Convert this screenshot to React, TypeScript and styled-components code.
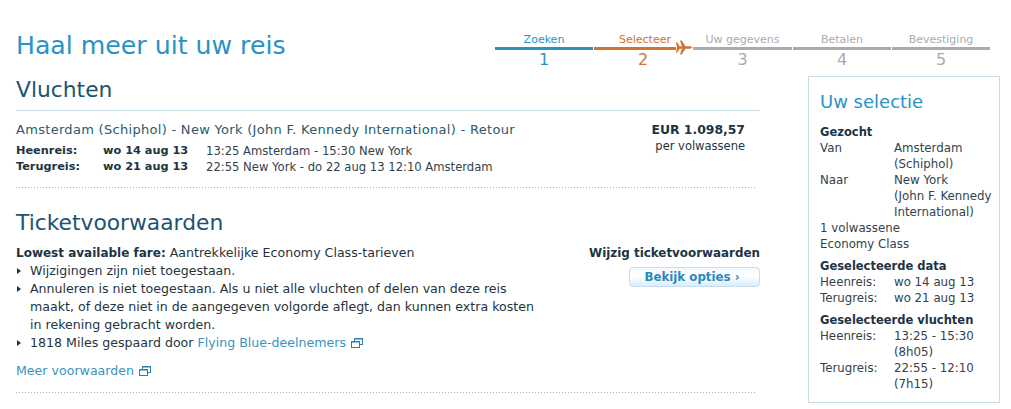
import styled, { createGlobalStyle, css } from "styled-components";

const GlobalStyle = createGlobalStyle`
  html, body {
    margin: 0;
    padding: 0;
    background: #fff;
  }
  body {
    font-family: "DejaVu Sans", Verdana, sans-serif;
    font-size: 11.5px;
    color: #1f3440;
  }
`;

const dottedBottom = css`
  background: repeating-linear-gradient(to right, #9fb4bd 0 1px, transparent 1px 3px) left bottom / 741px 1px no-repeat;
`;

const Page = styled.div`
  width: 1011px;
  height: 409px;
  overflow: hidden;
  box-sizing: border-box;
  padding: 30px 11px 0 16px;
`;

const TopRow = styled.div`
  display: flex;
  justify-content: space-between;
  height: 46px;
`;

const Title = styled.h1`
  margin: 0;
  font-size: 25.2px;
  line-height: 32px;
  font-weight: 400;
  color: #2a93c4;
`;

const Stepper = styled.ol`
  display: flex;
  list-style: none;
  margin: 0 10px 0 0;
  padding: 3px 0 0;
  gap: 1px;
`;

const Step = styled.li<{ $color: string; $width: number }>`
  position: relative;
  width: ${({ $width }) => $width}px;
  color: ${({ $color }) => $color};
  text-align: center;
  font-size: 11px;
  line-height: 13px;
  box-sizing: border-box;
`;

const StepLabel = styled.div<{ $plane?: boolean }>`
  padding-left: ${({ $plane }) => ($plane ? 4 : 0)}px;
`;

const StepBar = styled.div<{ $color: string; $plane?: boolean }>`
  height: 3px;
  margin-top: 1px;
  margin-right: ${({ $plane }) => ($plane ? 16 : 0)}px;
  background: ${({ $color }) => $color};
`;

const StepNumber = styled.div`
  font-size: 16px;
  line-height: 20px;
`;

const PlaneIcon = styled.svg`
  position: absolute;
  right: 0;
  top: 7px;
  width: 16px;
  height: 15px;
`;

const Body = styled.div`
  display: flex;
  justify-content: space-between;
`;

const Main = styled.main`
  width: 744px;
`;

const SectionTitle = styled.h2`
  margin: 0;
  font-size: 21.8px;
  line-height: 28px;
  font-weight: 400;
  color: #1c5570;
`;

const FlightsHeader = styled(SectionTitle)`
  padding-bottom: 6px;
  border-bottom: 1px solid #c9dde6;
`;

const FlightRow = styled.div`
  display: flex;
  justify-content: space-between;
  padding: 11px 15px 13px 0;
  ${dottedBottom};
`;

const Route = styled.div`
  font-size: 13px;
  letter-spacing: 0.3px;
  line-height: 16px;
  color: #2b5a6e;
  margin-bottom: 5px;
`;

const LegRow = styled.div`
  display: grid;
  grid-template-columns: 87px 103px auto;
  font-size: 11.6px;
  line-height: 16px;
  color: #33424b;
`;

const LegLabel = styled.strong`
  font-size: 11.3px;
  color: #1c3443;
`;

const Price = styled.div`
  text-align: right;
  font-size: 11.5px;
  line-height: 16px;
`;

const Amount = styled.strong`
  display: block;
  font-size: 12.4px;
  color: #1c3443;
`;

const ConditionsSection = styled.section`
  padding: 21px 0 13px;
  ${dottedBottom};
`;

const ConditionsRow = styled.div`
  display: flex;
  justify-content: space-between;
  margin-top: 7px;
`;

const ConditionsText = styled.div`
  width: 530px;
  font-size: 12.6px;
  line-height: 18px;
  color: #26343c;
`;

const FareLabel = styled.strong`
  font-size: 12px;
  color: #1c3443;
`;

const BulletList = styled.ul`
  list-style: none;
  margin: 0;
  padding: 0;
`;

const BulletItem = styled.li`
  position: relative;
  padding-left: 14px;

  &::before {
    content: "";
    position: absolute;
    left: 1px;
    top: 6px;
    border-left: 4px solid #1c3443;
    border-top: 3px solid transparent;
    border-bottom: 3px solid transparent;
  }
`;

const TextLink = styled.a`
  color: #3a93bf;
  text-decoration: none;
`;

const MoreLink = styled(TextLink)`
  display: block;
  margin-top: 10px;
  line-height: 18px;
`;

const ExternalIcon = styled.svg`
  width: 12px;
  height: 10px;
  margin-left: 5px;
  vertical-align: -1px;
`;

const ChangeBox = styled.div`
  display: flex;
  flex-direction: column;
  align-items: flex-end;
`;

const ChangeLabel = styled.strong`
  font-size: 11.9px;
  line-height: 18px;
  color: #1c3443;
`;

const OptionsButton = styled.button`
  width: 131px;
  height: 20px;
  margin-top: 5px;
  padding: 0 5px 0 0;
  font: bold 11.8px "DejaVu Sans", Verdana, sans-serif;
  color: #2a88bb;
  border: 1px solid #c5dfee;
  border-radius: 4px;
  background: linear-gradient(#f3f9fd 0%, #ffffff 45%, #d9edf8 100%);
`;

const Sidebar = styled.aside`
  width: 192px;
  height: 327px;
  box-sizing: border-box;
  padding: 11px 0 0 11px;
  border: 1px solid #c9dde6;
  font-size: 11.8px;
  line-height: 16px;
  color: #33424b;
`;

const SidebarTitle = styled.h3`
  margin: 0 0 8px;
  font-size: 18px;
  line-height: 28px;
  font-weight: 400;
  color: #2a93c4;
`;

const SidebarHeading = styled.strong`
  display: block;
  font-size: 11.5px;
  color: #1c3443;
`;

const SidebarGroup = styled.div`
  margin-bottom: 6px;
`;

const InfoRow = styled.div`
  display: grid;
  grid-template-columns: 74px 1fr;
`;

const External = () => (
  <ExternalIcon viewBox="0 0 12 10" fill="none" stroke="#2a7fae">
    <rect x="3.5" y="0.5" width="8" height="6" />
    <rect x="0.5" y="3.5" width="8" height="6" fill="#fff" />
    <path d="M4 1h7M1 4h7" />
  </ExternalIcon>
);

const steps = [
  { label: "Zoeken", color: "#2a93c4", width: 98 },
  { label: "Selecteer", color: "#cf7433", width: 98, plane: true },
  { label: "Uw gegevens", color: "#ababab", width: 99 },
  { label: "Betalen", color: "#ababab", width: 98 },
  { label: "Bevestiging", color: "#ababab", width: 98 },
];

const App = () => {
  return (
    <Page>
      <GlobalStyle />
      <TopRow>
        <Title>Haal meer uit uw reis</Title>
        <Stepper>
          {steps.map((step, i) => (
            <Step key={step.label} $color={step.color} $width={step.width}>
              <StepLabel $plane={step.plane}>{step.label}</StepLabel>
              <StepBar $color={step.color} $plane={step.plane} />
              <StepNumber>{i + 1}</StepNumber>
              {step.plane && (
                <PlaneIcon viewBox="0 0 16 15" fill={step.color}>
                  <path d="M0 2.5h1.4L3.6 6.3H6L4 .5h1.7l3.8 5.8h4c1.7 0 2.5.5 2.5 1.2s-.8 1.2-2.5 1.2h-4L5.7 14.5H4l2-5.8H3.6L1.4 12.5H0l1-5z" />
                </PlaneIcon>
              )}
            </Step>
          ))}
        </Stepper>
      </TopRow>
      <Body>
        <Main>
          <FlightsHeader>Vluchten</FlightsHeader>
          <FlightRow>
            <div>
              <Route>Amsterdam (Schiphol) - New York (John F. Kennedy International) - Retour</Route>
              <LegRow>
                <LegLabel>Heenreis:</LegLabel>
                <LegLabel>wo 14 aug 13</LegLabel>
                <span>13:25 Amsterdam - 15:30 New York</span>
              </LegRow>
              <LegRow>
                <LegLabel>Terugreis:</LegLabel>
                <LegLabel>wo 21 aug 13</LegLabel>
                <span>22:55 New York - do 22 aug 13 12:10 Amsterdam</span>
              </LegRow>
            </div>
            <Price>
              <Amount>EUR 1.098,57</Amount>
              per volwassene
            </Price>
          </FlightRow>
          <ConditionsSection>
            <SectionTitle>Ticketvoorwaarden</SectionTitle>
            <ConditionsRow>
              <ConditionsText>
                <FareLabel>Lowest available fare:</FareLabel> Aantrekkelijke Economy Class-tarieven
                <BulletList>
                  <BulletItem>Wijzigingen zijn niet toegestaan.</BulletItem>
                  <BulletItem>
                    Annuleren is niet toegestaan. Als u niet alle vluchten of delen van deze reis maakt, of deze
                    niet in de aangegeven volgorde aflegt, dan kunnen extra kosten in rekening gebracht worden.
                  </BulletItem>
                  <BulletItem>
                    1818 Miles gespaard door <TextLink href="#">Flying Blue-deelnemers<External /></TextLink>
                  </BulletItem>
                </BulletList>
                <MoreLink href="#">Meer voorwaarden<External /></MoreLink>
              </ConditionsText>
              <ChangeBox>
                <ChangeLabel>Wijzig ticketvoorwaarden</ChangeLabel>
                <OptionsButton>Bekijk opties ›</OptionsButton>
              </ChangeBox>
            </ConditionsRow>
          </ConditionsSection>
        </Main>
        <Sidebar>
          <SidebarTitle>Uw selectie</SidebarTitle>
          <SidebarGroup>
            <SidebarHeading>Gezocht</SidebarHeading>
            <InfoRow><span>Van</span><span>Amsterdam<br />(Schiphol)</span></InfoRow>
            <InfoRow><span>Naar</span><span>New York<br />(John F. Kennedy<br />International)</span></InfoRow>
            <div>1 volwassene</div>
            <div>Economy Class</div>
          </SidebarGroup>
          <SidebarGroup>
            <SidebarHeading>Geselecteerde data</SidebarHeading>
            <InfoRow><span>Heenreis:</span><span>wo 14 aug 13</span></InfoRow>
            <InfoRow><span>Terugreis:</span><span>wo 21 aug 13</span></InfoRow>
          </SidebarGroup>
          <SidebarGroup>
            <SidebarHeading>Geselecteerde vluchten</SidebarHeading>
            <InfoRow><span>Heenreis:</span><span>13:25 - 15:30<br />(8h05)</span></InfoRow>
            <InfoRow><span>Terugreis:</span><span>22:55 - 12:10<br />(7h15)</span></InfoRow>
          </SidebarGroup>
        </Sidebar>
      </Body>
    </Page>
  );
};

export default App;
